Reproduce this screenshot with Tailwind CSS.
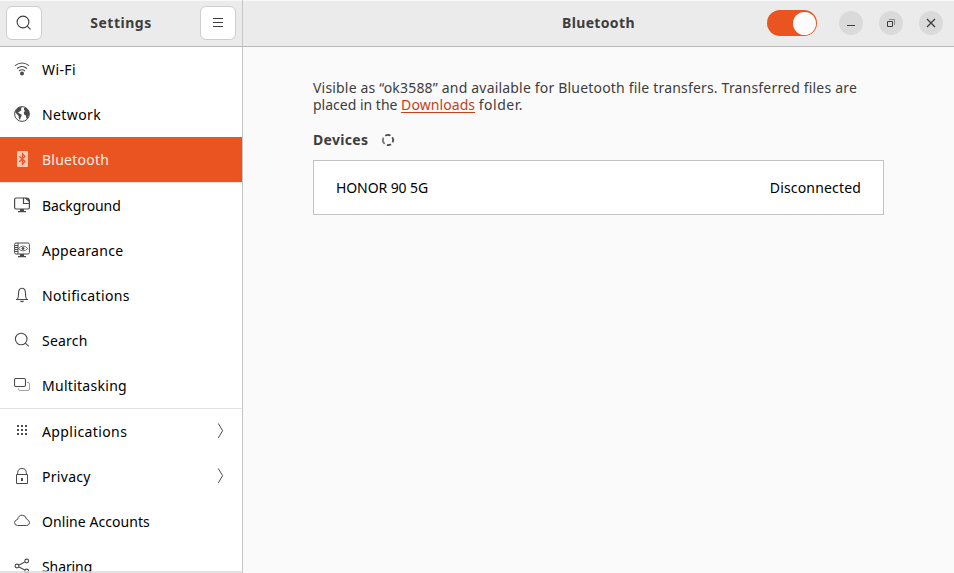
<!DOCTYPE html>
<html lang="en">
<head>
<meta charset="utf-8">
<title>Settings</title>
<script src="https://cdn.jsdelivr.net/npm/@tailwindcss/browser@4"></script>
</head>
<body class="flex h-[573px] w-[954px] flex-col overflow-hidden bg-[#fafafa] font-['Noto_Sans','Open_Sans',sans-serif] text-[14px] leading-[17px] text-black">

<header class="flex h-[47px] shrink-0 border-b border-[#b9b9b9] bg-[#ebebeb] text-[#3d3d3d] shadow-[inset_0_1px_0_#f8f8f8]">
  <div class="flex w-[243px] shrink-0 items-center justify-between border-r border-[#c6c6c6] px-1.5">
    <button class="flex h-[34px] w-9 items-center justify-center rounded-md border border-[#cdcdcd] bg-white" aria-label="Search">
      <svg class="size-4" viewBox="0 0 16 16" fill="none" stroke="#3d3d3d" stroke-width="1.1"><circle cx="7" cy="7" r="5.9"/><path d="M11.2 11.2L14.6 14.4"/></svg>
    </button>
    <h1 class="mb-0.5 font-bold tracking-[.5px]">Settings</h1>
    <button class="flex h-[34px] w-9 items-center justify-center rounded-md border border-[#cdcdcd] bg-white" aria-label="Menu">
      <svg class="size-4" viewBox="0 0 16 16" stroke="#3d3d3d"><path d="M3 3.5H13M3 7.5H13M3 11.5H13"/></svg>
    </button>
  </div>
  <div class="flex flex-1 items-center pr-[11px]">
    <h2 class="mb-0.5 ml-[319px] w-[205px] font-bold tracking-[.35px]">Bluetooth</h2>
    <div class="flex h-[26px] w-[50px] items-center justify-end rounded-full bg-[#e95420] pr-[1.5px]"><span class="size-[23px] rounded-full bg-[#fcfcfc]"></span></div>
    <div class="ml-[22px] flex gap-4">
      <button class="size-6 rounded-full bg-[#dadada]" aria-label="Minimize"><svg class="size-6" viewBox="0 0 24 24" stroke="#3d3d3d"><path d="M8 14.5H16"/></svg></button>
      <button class="size-6 rounded-full bg-[#dadada]" aria-label="Restore"><svg class="size-6" viewBox="0 0 24 24" fill="none" stroke="#3d3d3d"><path d="M8.5 10.5H13.5V15.500H8.5Z"/><path d="M10 8.500H15.500V14" stroke="#8b8b8b"/></svg></button>
      <button class="size-6 rounded-full bg-[#dadada]" aria-label="Close"><svg class="size-6" viewBox="0 0 24 24" stroke="#3d3d3d" stroke-width="1.3"><path d="M8 8L16 16M16 8L8 16"/></svg></button>
    </div>
  </div>
</header>

<div class="flex min-h-0 flex-1">
  <nav class="relative w-[243px] shrink-0 overflow-hidden border-r border-[#c6c6c6] bg-white">
    <a class="flex h-[45px] items-center gap-3 pl-3.5">
      <svg class="mb-px size-4" viewBox="0 0 16 16" fill="none" stroke="#4a4a4a" stroke-width="1.1"><path d="M1 4.600Q8 -.6 15 4.600M3 7.500Q8 3.400 13 7.500M5 10Q8 7.500 11 10"/><circle cx="8" cy="12.500" r="2" fill="#4a4a4a" stroke="none"/></svg>
      <span class="tracking-[.4px]">Wi-Fi</span></a>
    <a class="flex h-[45px] items-center gap-3 pl-3.5">
      <svg class="mb-px size-4" viewBox="0 0 16 16"><circle cx="8" cy="8" r="7.400" fill="none" stroke="#4a4a4a"/><path fill="#4a4a4a" d="M1 6L3.200 2.500 6 1 8 1.500 6.800 3 7.500 4.200 5.500 5.500 4 6.500 5.500 7.500 7.800 8.800 7 11 5.800 14 4.800 12 4.500 9.800 3 8.200ZM10 2L12.500 2 15 5.500 15 9 13.500 12.500 12.300 12.500 12 9.500 10.300 8.800 9.700 6.500 11 5 10 4Z"/></svg>
      <span class="tracking-[.4px]">Network</span></a>
    <a class="flex h-[46px] items-center gap-3 border-b border-[#e9e4e2] bg-[#e95420] pl-3.5 text-[#fdeee9]">
      <svg class="mb-px size-4" viewBox="0 0 16 16"><rect x="3" width="11" height="16" rx="1" fill="#f8c8b7"/><path d="M5.300 5.200L11 10.600 8.500 13.200V2.800L11 5.400 5.300 10.800" fill="none" stroke="#e95420" stroke-width="1.200"/></svg>
      <span class="tracking-[.25px]">Bluetooth</span></a>
    <a class="flex h-[45px] items-center gap-3 pl-3.5">
      <svg class="mb-px size-4" viewBox="0 0 16 16" fill="none" stroke="#4a4a4a" stroke-width="1.2"><path d="M9.500 1H2Q.6 1 .6 2.500V10.500Q.6 12 2 12H14Q15.400 12 15.400 10.500V6"/><path d="M9.500 1V6.500H15.400V3.500Q15 1 12.500 1Z"/><path fill="#4a4a4a" stroke="none" d="M10.500 1H13Q15.500 1.500 15.500 4V5.500ZM6 12H10V14H12V15.200H4V14H6Z"/></svg>
      <span class="tracking-[-.1px]">Background</span></a>
    <a class="flex h-[45px] items-center gap-3 pl-3.5">
      <svg class="mb-px size-4" viewBox="0 0 16 16" fill="none" stroke="#4a4a4a"><rect x=".6" y="1" width="14.800" height="11" rx="1.500"/><path d="M4 1V12M1 3.500H4M1 5.500H4M1 7.500H4M1 9.500H4"/><path d="M4.500 6.500Q9 1.500 13.700 6.500Q9 11.400 4.500 6.500Z" stroke-width=".8"/><circle cx="9" cy="6.500" r="1" fill="#4a4a4a"/><path fill="#4a4a4a" stroke="none" d="M6 12H10V14H12V15.200H4V14H6Z"/></svg>
      <span class="tracking-[.28px]">Appearance</span></a>
    <a class="flex h-[45px] items-center gap-3 pl-3.5">
      <svg class="mb-px size-4" viewBox="0 0 16 16" fill="none" stroke="#4a4a4a" stroke-width="1.1"><path d="M2 12.500H14M3.500 12Q4.500 10.500 4.500 6.500Q4.500 1.300 8 1.300T11.500 6.500Q11.500 10.500 12.500 12"/><path fill="#4a4a4a" stroke="none" d="M6 13.700H10Q9.500 15.200 8 15.200T6 13.700Z"/></svg>
      <span class="tracking-[.35px]">Notifications</span></a>
    <a class="flex h-[45px] items-center gap-3 pl-3.5">
      <svg class="mb-px size-4" viewBox="0 0 16 16" fill="none" stroke="#4a4a4a" stroke-width="1.1"><circle cx="7.200" cy="7" r="5.800"/><path d="M11.300 11.200L14.800 14.400"/></svg>
      <span class="tracking-[.2px]">Search</span></a>
    <a class="flex h-[45px] items-center gap-3 pl-3.5">
      <svg class="mb-px size-4" viewBox="0 0 16 16" fill="none"><rect x=".5" y="1.500" width="11" height="8" rx="1.500" stroke="#4a4a4a" stroke-width="1.1"/><path d="M13 5.500H14Q15.500 5.500 15.500 7V12Q15.500 13.500 14 13.500H6Q4.500 13.500 4.500 12V11.500" stroke="#a2a2a2"/></svg>
      <span class="tracking-[.28px]">Multitasking</span></a>
    <a class="flex h-[46px] items-center gap-3 border-t border-[#e2e2e2] pl-3.5">
      <svg class="mb-px size-4" viewBox="0 0 16 16" fill="#4a4a4a"><path d="M3 2h2v2H3zM7 2h2v2H7zM11 2h2v2h-2zM3 6h2v2H3zM7 6h2v2H7zM11 6h2v2h-2zM3 10h2v2H3zM7 10h2v2H7zM11 10h2v2h-2z"/></svg>
      <span class="tracking-[.4px]">Applications</span>
      <svg class="mr-3 mb-px ml-auto size-4" viewBox="0 0 16 16" fill="none" stroke="#4a4a4a"><path d="M4.300 .5L8.600 7.700 4.300 14.900"/></svg></a>
    <a class="flex h-[45px] items-center gap-3 pl-3.5">
      <svg class="mb-px size-4" viewBox="0 0 16 16" fill="none" stroke="#4a4a4a"><path d="M2.500 6.500H13.500V15.500H2.500ZM3.700 6V4.800Q3.800 .5 8 .5T12.300 4.800V6"/><path d="M7 10h2v3H7z" fill="#4a4a4a" stroke="none"/></svg>
      <span class="tracking-[.3px]">Privacy</span>
      <svg class="mr-3 mb-px ml-auto size-4" viewBox="0 0 16 16" fill="none" stroke="#4a4a4a"><path d="M4.300 .5L8.600 7.700 4.300 14.900"/></svg></a>
    <a class="flex h-[45px] items-center gap-3 pl-3.5">
      <svg class="mb-px size-4" viewBox="0 0 16 16" fill="none" stroke="#4a4a4a"><path d="M3.500 12.500Q.5 12.300 .5 9.500Q.7 7 3.600 6.500Q4.300 2.200 8.200 2.200Q11.800 2.300 12.500 6Q15.500 7.200 15.500 9.800Q15.300 12.300 12.800 12.500Z"/></svg>
      <span class="tracking-[.06px]">Online Accounts</span></a>
    <a class="flex h-[45px] items-center gap-3 pl-3.5">
      <svg class="mb-px size-4" viewBox="0 0 16 16" fill="none" stroke="#4a4a4a" stroke-width="1.1"><circle cx="3" cy="8" r="1.900"/><circle cx="12.700" cy="3" r="1.900"/><circle cx="12.700" cy="13" r="1.900"/><path d="M5 7L10.800 4M5 9L10.800 12"/></svg>
      <span class="tracking-[-.1px]">Sharing</span></a>
    <div class="absolute bottom-0 left-0 h-0.5 w-full bg-[#dcdcdc]/80"></div>
  </nav>

  <main class="flex-1 pt-8 pl-[70px] text-[#3d3d3d]">
    <p class="whitespace-nowrap"><span class="tracking-[.185px]">Visible as “ok3588” and available for Bluetooth file transfers. Transferred files are</span><br>placed in the <a class="tracking-[.08px] text-[#c7401b] underline underline-offset-2">Downloads</a> <span class="tracking-[.5px]">folder.</span></p>
    <div class="mt-[18px] flex items-center gap-3">
      <h3 class="font-bold tracking-[.3px]">Devices</h3>
      <svg class="size-4" viewBox="0 0 16 16" fill="none" stroke="#4a4a4a" stroke-width="1.8"><path d="M5.300 3.700A5.100 5.100 0 0 1 10.500 3.500M12.300 5.200A5.100 5.100 0 0 1 12.600 10.300M11 12.200A5.100 5.100 0 0 1 6.800 13"/><path d="M4.700 11.900A5.100 5.100 0 0 1 3.500 5.700" stroke="#777"/></svg>
    </div>
    <section class="mt-3 flex h-[55px] w-[571px] items-center justify-between border border-[#c3c3c3] bg-white px-[22px] text-black">
      <span class="tracking-[-.1px]">HONOR 90 5G</span><span class="tracking-[.17px]">Disconnected</span>
    </section>
  </main>
</div>
</body>
</html>
